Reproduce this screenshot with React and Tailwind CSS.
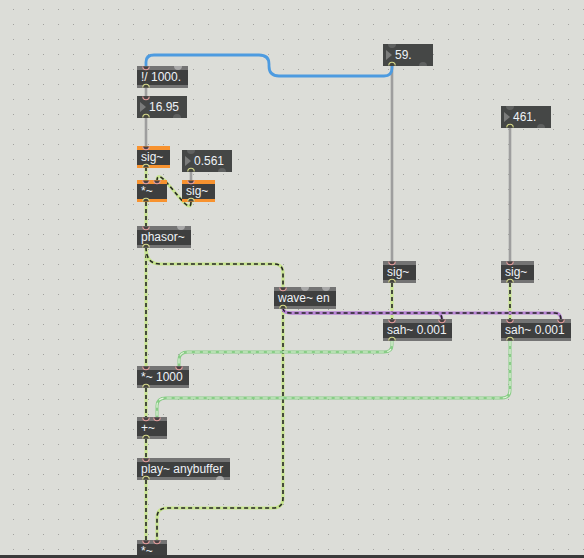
import React from 'react';

const boxes = [
  { k: 'obj', cls: 'left-[137px] top-[66px] w-[51px]', label: '!/ 1000.' },
  { k: 'num', cls: 'left-[137px] top-[96px] w-[50px]', label: '16.95' },
  { k: 'org', cls: 'left-[137px] top-[146px] w-[33px]', label: 'sig~' },
  { k: 'num', cls: 'left-[182px] top-[150px] w-[50px]', label: '0.561' },
  { k: 'org', cls: 'left-[137px] top-[180px] w-[30px]', label: '*~' },
  { k: 'org', cls: 'left-[182px] top-[180px] w-[33px]', label: 'sig~' },
  { k: 'obj', cls: 'left-[137px] top-[226px] w-[54px]', label: 'phasor~' },
  { k: 'num', cls: 'left-[383px] top-[44px] w-[50px]', label: '59.' },
  { k: 'num', cls: 'left-[501px] top-[106px] w-[50px]', label: '461.' },
  { k: 'obj', cls: 'left-[383px] top-[261px] w-[33px]', label: 'sig~' },
  { k: 'obj', cls: 'left-[501px] top-[261px] w-[33px]', label: 'sig~' },
  { k: 'obj', cls: 'left-[274px] top-[287px] w-[62px]', label: 'wave~ en' },
  { k: 'obj', cls: 'left-[383px] top-[319px] w-[69px]', label: 'sah~ 0.001' },
  { k: 'obj', cls: 'left-[501px] top-[319px] w-[70px]', label: 'sah~ 0.001' },
  { k: 'obj', cls: 'left-[137px] top-[366px] w-[52px]', label: '*~ 1000' },
  { k: 'obj', cls: 'left-[137px] top-[417px] w-[30px]', label: '+~' },
  { k: 'obj', cls: 'left-[137px] top-[458px] w-[93px]', label: 'play~ anybuffer' },
  { k: 'obj', cls: 'left-[137px] top-[540px] w-[30px]', label: '*~' },
];

// connected inlets [x, top]
const inConn = [
  [146, 66], [146, 96], [146, 146], [146, 180], [157, 180], [191, 180], [146, 226],
  [392, 261], [510, 261], [283, 287], [392, 319], [442, 319], [510, 319], [561, 319],
  [146, 366], [179, 366], [146, 417], [157, 417], [146, 458], [146, 540], [157, 540],
];
// connected outlets [x, bottom]
const outConn = [
  [146, 88], [146, 118], [146, 168], [191, 172], [146, 202], [191, 202], [146, 248],
  [392, 66], [510, 128], [392, 283], [510, 283], [283, 309], [392, 341], [510, 341],
  [146, 388], [146, 439], [146, 480],
];
// unconnected on object boxes [x, y, top?]
const freeObj = [
  [178, 66, true], [181, 226, true], [305, 287, true], [326, 287, true], [220, 480, false],
];
// unconnected on number boxes
const freeNum = [
  [392, 44, true], [423, 66, false], [510, 106, true], [541, 128, false],
  [177, 118, false], [191, 150, true], [222, 172, false],
];

function Box({ k, cls, label }) {
  if (k === 'num') {
    return (
      <div className={`absolute h-[22px] flex items-center bg-[#454746] pl-[12px] text-[12px] leading-none text-[#eef2f7] ${cls}`}>
        <div className="absolute left-[3px] top-[6px] w-0 h-0 border-y-[5px] border-y-transparent border-l-[6px] border-l-[#7b7c7b]" />
        <span>{label}</span>
      </div>
    );
  }
  const strip = k === 'org' ? 'border-[#f7922f]' : 'border-[#747474]';
  return (
    <div className={`absolute h-[22px] flex items-center bg-[#3e3f3f] border-t-[4px] border-b-[3px] ${strip} px-[4px] text-[12px] leading-none text-[#eef2f7] whitespace-nowrap ${cls}`}>
      <span className="-mt-[1px]">{label}</span>
    </div>
  );
}

function Sig({ d }) {
  return (
    <g fill="none">
      <path d={d} stroke="#c8e68e" strokeWidth="3" />
      <path d={d} stroke="#262626" strokeWidth="1.6" strokeDasharray="4 3" />
    </g>
  );
}
function Green({ d }) {
  return (
    <g fill="none">
      <path d={d} stroke="#88cd86" strokeWidth="3" />
      <path d={d} stroke="#e6f3df" strokeWidth="1.2" strokeDasharray="5 3" />
    </g>
  );
}
function Purple({ d }) {
  return (
    <g fill="none">
      <path d={d} stroke="#b984d6" strokeWidth="3" />
      <path d={d} stroke="#262626" strokeWidth="1.6" strokeDasharray="4 3" />
    </g>
  );
}
function Gray({ d }) {
  return <path d={d} fill="none" stroke="#9e9e9e" strokeWidth="2.6" />;
}

export default function App() {
  return (
    <div className="relative w-[584px] h-[558px] overflow-hidden bg-[#dcddd8] [font-family:'Liberation_Sans',Arial,sans-serif]">
      <svg className="absolute left-0 top-0" width="584" height="558">
        <defs>
          <pattern id="grid" x="13" y="9" width="15" height="15" patternUnits="userSpaceOnUse">
            <rect x="0" y="0" width="1" height="1" fill="#a2a29f" />
          </pattern>
        </defs>
        <rect width="584" height="558" fill="url(#grid)" />

        {/* control cords */}
        <Gray d="M146 87 L146 97" />
        <Gray d="M146 117 L146 147" />
        <Gray d="M191 171 L191 181" />
        <Gray d="M392 66 L392 262" />
        <Gray d="M510 127 L510 262" />
        <path
          d="M392 65 L392 68 Q392 76 384 76 L279 76 Q269 76 269 66 L269 64 Q269 55 259 55 L154 55 Q146 55 146 62 L146 67"
          fill="none"
          stroke="#4d9be0"
          strokeWidth="2.8"
        />

        {/* signal cords */}
        <Sig d="M146 167 L146 181" />
        <Sig d="M191 202 C191 222, 157 160, 157 181" />
        <Sig d="M146 202 L146 227" />
        <Sig d="M146 247 L146 367" />
        <Sig d="M146 247 Q146 264 160 264 L274 264 Q283 264 283 273 L283 288" />
        <Sig d="M283 308 L283 498 Q283 508 273 508 L167 508 Q157 508 157 518 L157 541" />
        <Sig d="M392 283 L392 320" />
        <Sig d="M510 283 L510 320" />
        <Sig d="M146 388 L146 418" />
        <Sig d="M146 439 L146 459" />
        <Sig d="M146 480 L146 541" />

        <Purple d="M283 308 Q283 313 291 313 L436 313 Q442 313 442 320" />
        <Purple d="M283 308 Q283 313 291 313 L555 313 Q561 313 561 320" />

        <Green d="M392 341 L392 345 Q392 352 384 352 L188 352 Q179 352 179 360 L179 367" />
        <Green d="M510 341 L510 390 Q510 398 502 398 L166 398 Q157 398 157 406 L157 418" />
      </svg>

      {boxes.map((b, i) => (
        <Box key={i} {...b} />
      ))}

      <svg className="absolute left-0 top-0 pointer-events-none" width="584" height="558">
        {freeObj.map(([x, y, top], i) =>
          top ? (
            <path key={'fo' + i} d={`M${x - 4} ${y} A4 4 0 0 0 ${x + 4} ${y} Z`} fill="#a9a9a9" />
          ) : (
            <path key={'fo' + i} d={`M${x - 4} ${y} A4 4 0 0 1 ${x + 4} ${y} Z`} fill="#a9a9a9" />
          )
        )}
        {freeNum.map(([x, y, top], i) =>
          top ? (
            <path key={'fn' + i} d={`M${x - 4} ${y} A4 4 0 0 0 ${x + 4} ${y} Z`} fill="#5f6160" />
          ) : (
            <path key={'fn' + i} d={`M${x - 4} ${y} A4 4 0 0 1 ${x + 4} ${y} Z`} fill="#5f6160" />
          )
        )}
        {inConn.map(([x, y], i) => (
          <path
            key={'ic' + i}
            d={`M${x - 3.2} ${y + 0.5} A3.2 3.2 0 0 0 ${x + 3.2} ${y + 0.5}`}
            fill="#4a4243"
            stroke="#e59d9d"
            strokeWidth="1.1"
          />
        ))}
        {outConn.map(([x, y], i) => (
          <path
            key={'oc' + i}
            d={`M${x - 3.2} ${y - 0.5} A3.2 3.2 0 0 1 ${x + 3.2} ${y - 0.5}`}
            fill="#46473f"
            stroke="#d9dc8c"
            strokeWidth="1.1"
          />
        ))}
      </svg>

      <div className="absolute left-0 right-0 bottom-0 h-[3px] bg-[#3a3a3a]" />
    </div>
  );
}
